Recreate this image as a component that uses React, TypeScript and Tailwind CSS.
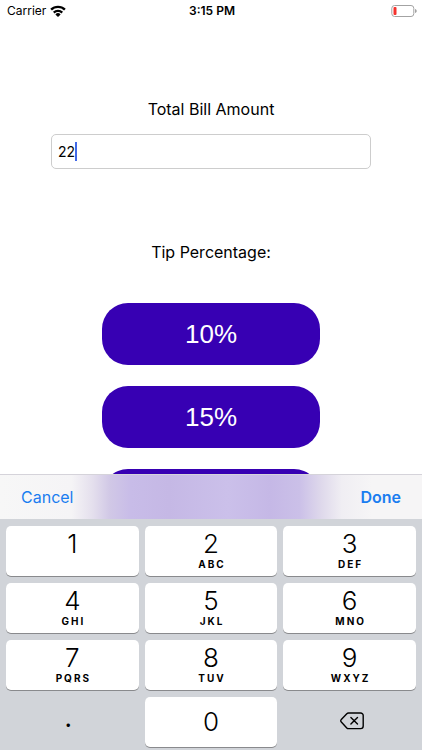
import { useState } from 'react';

interface Key {
  digit: string;
  letters?: string;
}

interface TipOption {
  id: string;
  label?: string;
}

const KEYS: Key[] = [
  { digit: '1' },
  { digit: '2', letters: 'ABC' },
  { digit: '3', letters: 'DEF' },
  { digit: '4', letters: 'GHI' },
  { digit: '5', letters: 'JKL' },
  { digit: '6', letters: 'MNO' },
  { digit: '7', letters: 'PQRS' },
  { digit: '8', letters: 'TUV' },
  { digit: '9', letters: 'WXYZ' },
];

const TIPS: TipOption[] = [
  { id: 'low', label: '10%' },
  { id: 'medium', label: '15%' },
  { id: 'high' },
];

const KEY_CLASS =
  'flex h-[50px] flex-col items-center rounded-[5px] bg-white shadow-[0_1px_0_#898a8d]';

function WifiIcon() {
  return (
    <svg viewBox="0 0 16 12" className="h-3 w-4" aria-hidden="true">
      <g fill="none" stroke="#000" strokeWidth="2.4">
        <path d="M1.1 4.7a9.8 9.8 0 0 1 13.8 0" />
        <path d="M3.8 7.600a6 6 0 0 1 8.400 0" />
      </g>
      <path d="M8 12 5.400 9.400a3.700 3.700 0 0 1 5.200 0z" />
    </svg>
  );
}

function BatteryIcon() {
  return (
    <svg viewBox="0 0 26 12" className="h-3 w-[26px]" aria-hidden="true">
      <rect x="0.8" y="0.5" width="22" height="11" rx="2.8" fill="none" stroke="#a3a3a3" />
      <rect x="2.500" y="2" width="3" height="8" rx="1" fill="#f5322d" />
      <path d="M24.200 4v4c.8-.3 1.400-1.100 1.400-2s-.6-1.700-1.400-2z" fill="#8e8e8e" />
    </svg>
  );
}

function BackspaceIcon() {
  return (
    <svg
      viewBox="0 0 24 18"
      className="h-[18px] w-6"
      fill="none"
      stroke="#000"
      strokeWidth="1.4"
      strokeLinecap="round"
      strokeLinejoin="round"
      aria-hidden="true"
    >
      <path d="M8.500 1H20.600a2.600 2.600 0 0 1 2.600 2.600v10.400a2.600 2.600 0 0 1-2.600 2.600H8.500a2.400 2.400 0 0 1-1.700-.7L1.300 10.100a1.800 1.800 0 0 1 0-2.600L6.800 1.700A2.400 2.400 0 0 1 8.500 1z" />
      <path d="m10.900 5.500 6.600 6.600M17.500 5.500l-6.600 6.600" />
    </svg>
  );
}

function StatusBar() {
  return (
    <header className="grid h-[22px] shrink-0 grid-cols-3 items-center pr-[5px] pl-[7px] text-xs">
      <div className="flex items-center gap-1">
        <span>Carrier</span>
        <WifiIcon />
      </div>
      <span className="text-center font-semibold">3:15 PM</span>
      <div className="flex justify-end">
        <BatteryIcon />
      </div>
    </header>
  );
}

export default function App() {
  const [amount, setAmount] = useState('22');
  const [tip, setTip] = useState<string | null>(null);

  const press = (char: string) => setAmount((prev) => prev + char);

  return (
    <div className="flex h-screen flex-col overflow-hidden bg-white font-['Inter',sans-serif] text-black">
      <StatusBar />

      <main className="flex min-h-0 flex-1 flex-col items-center overflow-hidden px-6 pt-[75px]">
        <label htmlFor="amount" className="text-base leading-6">
          Total Bill Amount
        </label>
        <div className="relative mt-[13px] w-full max-w-80">
          <input
            id="amount"
            type="text"
            inputMode="decimal"
            value={amount}
            onChange={(e) => setAmount(e.target.value)}
            className="block h-[35px] w-full rounded-[5px] border border-[#cdcdcd] px-1.5 text-sm caret-transparent outline-none"
          />
          {/* caret follows the typed text */}
          <div className="pointer-events-none absolute inset-y-0 left-[7px] flex items-center text-sm">
            <span className="invisible">{amount}</span>
            <span className="h-[19px] w-0.5 bg-[#4169e8]" />
          </div>
        </div>

        <h2 className="mt-[71px] text-base leading-6">Tip Percentage:</h2>
        <div className="mt-[39px] flex w-full flex-col items-center gap-[21px]">
          {TIPS.map((option) => (
            <button
              key={option.id}
              type="button"
              aria-label={option.label ?? 'Other tip'}
              aria-pressed={tip === option.id}
              onClick={() => setTip(option.id)}
              className="h-[62px] w-full max-w-[218px] shrink-0 rounded-[26px] bg-[#3700b3] font-['Liberation_Sans',sans-serif] text-[26px] text-white"
            >
              {option.label}
            </button>
          ))}
        </div>
      </main>

      <section className="shrink-0 bg-[#d1d4d9]">
        <div className="flex h-[45px] items-center justify-between border-t border-[#d5d3da] bg-[linear-gradient(to_right,#f7f7f7_0%,#f5f4f6_17%,#e4dfed_22%,#d1c8e6_26%,#c8bce8_31%,#c5b8e5_40%,#cbc0ea_54%,#c5b8e6_64%,#cbc0e8_71%,#ded8eb_76%,#f0eef3_81%,#f6f5f6_88%)] px-[21px] text-base text-[#1a7df0]">
          <button type="button" onClick={() => setAmount('')}>
            Cancel
          </button>
          <button type="button" className="font-semibold">
            Done
          </button>
        </div>

        <div className="grid grid-cols-3 gap-x-1.5 gap-y-[7px] px-1.5 pt-[7px] pb-[3px]">
          {KEYS.map((key) => (
            <button key={key.digit} type="button" onClick={() => press(key.digit)} className={`${KEY_CLASS} pt-1`}>
              <span className="text-[26px] leading-7 font-light">{key.digit}</span>
              {key.letters && (
                <span className="pl-0.5 text-[10px] leading-3 font-bold tracking-[2px]">{key.letters}</span>
              )}
            </button>
          ))}
          <button type="button" onClick={() => press('.')} className="h-[50px] pr-2 pb-2 text-[26px] leading-7">
            .
          </button>
          <button type="button" onClick={() => press('0')} className={`${KEY_CLASS} justify-center`}>
            <span className="text-[26px] leading-7 font-light">0</span>
          </button>
          <button
            type="button"
            aria-label="Delete"
            onClick={() => setAmount((prev) => prev.slice(0, -1))}
            className="flex h-[50px] items-center justify-center pb-0.5 pl-1"
          >
            <BackspaceIcon />
          </button>
        </div>
      </section>
    </div>
  );
}
